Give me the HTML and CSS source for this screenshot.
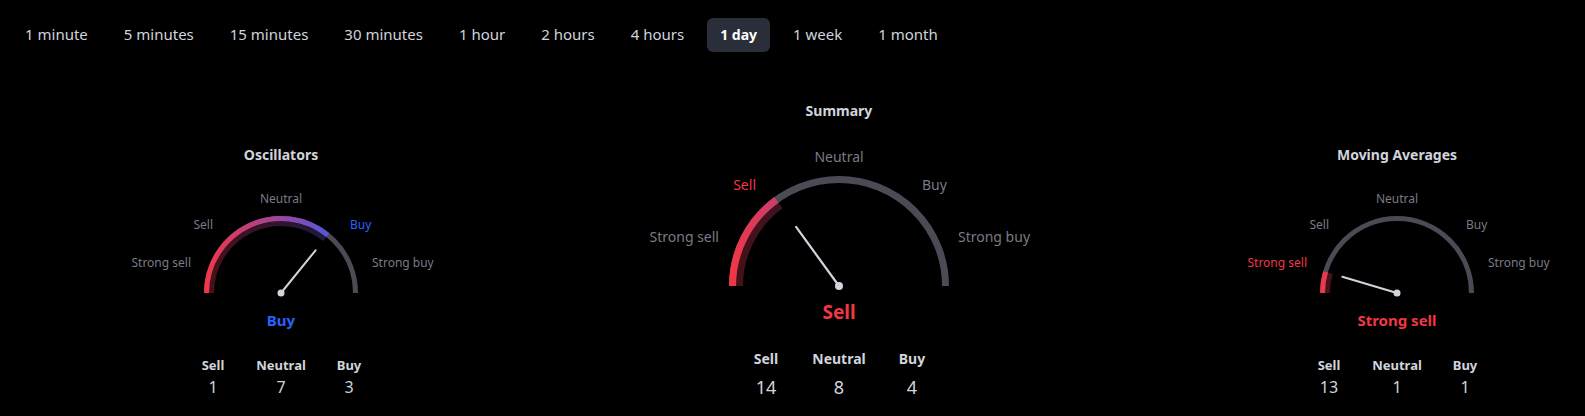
FILE: index.html
```html
<!DOCTYPE html>
<html>
<head>
<meta charset="utf-8">
<link rel="stylesheet" href="styles.css">
</head>
<body>
<nav class="tabs">
  <div class="tab">1 minute</div>
  <div class="tab">5 minutes</div>
  <div class="tab">15 minutes</div>
  <div class="tab">30 minutes</div>
  <div class="tab">1 hour</div>
  <div class="tab">2 hours</div>
  <div class="tab">4 hours</div>
  <div class="tab tab-active">1 day</div>
  <div class="tab">1 week</div>
  <div class="tab">1 month</div>
</nav>

<main class="gauges">
  <section class="col col-small">
    <h2 class="title">Oscillators</h2>
    <div class="gauge gauge-small">
      <svg class="gauge-svg" width="380" height="135" viewBox="0 0 380 135">
        <defs>
          <linearGradient id="g1" gradientUnits="userSpaceOnUse" x1="113" y1="0" x2="267" y2="0">
            <stop offset="0" stop-color="#f23645"/>
            <stop offset="0.5" stop-color="#9c45a0"/>
            <stop offset="1" stop-color="#2962ff"/>
          </linearGradient>
        </defs>
        <path d="M115.5 128 A74.5 74.5 0 0 1 264.5 128" fill="none" stroke="#4a4b55" stroke-width="5"/>
        <path d="M115.5 128 A74.5 74.5 0 0 1 236.88 70.10" fill="none" stroke="url(#g1)" stroke-width="5"/>
        <path d="M120.5 128 A69.5 69.5 0 0 1 233.74 74.01" fill="none" stroke="url(#g1)" stroke-opacity="0.3" stroke-width="5"/>
        <line x1="190" y1="128" x2="224.6" y2="85.3" stroke="#d1d4dc" stroke-width="2" stroke-linecap="round"/>
        <circle cx="190" cy="128" r="3.5" fill="#d1d4dc"/>
      </svg>
      <span class="lbl lbl-neutral">Neutral</span>
      <span class="lbl lbl-sell">Sell</span>
      <span class="lbl lbl-buy is-buy">Buy</span>
      <span class="lbl lbl-ssell">Strong sell</span>
      <span class="lbl lbl-sbuy">Strong buy</span>
    </div>
    <div class="result result-small is-buy">Buy</div>
    <div class="counts counts-small">
      <div class="count"><span class="count-label">Sell</span><span class="count-num">1</span></div>
      <div class="count"><span class="count-label">Neutral</span><span class="count-num">7</span></div>
      <div class="count"><span class="count-label">Buy</span><span class="count-num">3</span></div>
    </div>
  </section>

  <section class="col col-large">
    <h2 class="title">Summary</h2>
    <div class="gauge gauge-large">
      <svg class="gauge-svg" width="380" height="170" viewBox="0 0 380 170">
        <defs>
          <linearGradient id="g2" gradientUnits="userSpaceOnUse" x1="80" y1="0" x2="300" y2="0">
            <stop offset="0" stop-color="#f23645"/>
            <stop offset="0.5" stop-color="#9c45a0"/>
            <stop offset="1" stop-color="#2962ff"/>
          </linearGradient>
        </defs>
        <path d="M83.5 165 A106.5 106.5 0 0 1 296.5 165" fill="none" stroke="#4a4b55" stroke-width="7"/>
        <path d="M83.5 165 A106.5 106.5 0 0 1 127.40 78.84" fill="none" stroke="url(#g2)" stroke-width="7"/>
        <path d="M90.5 165 A99.5 99.5 0 0 1 131.52 84.50" fill="none" stroke="url(#g2)" stroke-opacity="0.3" stroke-width="7"/>
        <line x1="190" y1="165" x2="147.1" y2="105.9" stroke="#d1d4dc" stroke-width="2.2" stroke-linecap="round"/>
        <circle cx="190" cy="165" r="4" fill="#d1d4dc"/>
      </svg>
      <span class="lbl lbl-neutral">Neutral</span>
      <span class="lbl lbl-sell is-sell">Sell</span>
      <span class="lbl lbl-buy">Buy</span>
      <span class="lbl lbl-ssell">Strong sell</span>
      <span class="lbl lbl-sbuy">Strong buy</span>
    </div>
    <div class="result result-large is-sell">Sell</div>
    <div class="counts counts-large">
      <div class="count"><span class="count-label">Sell</span><span class="count-num">14</span></div>
      <div class="count"><span class="count-label">Neutral</span><span class="count-num">8</span></div>
      <div class="count"><span class="count-label">Buy</span><span class="count-num">4</span></div>
    </div>
  </section>

  <section class="col col-small">
    <h2 class="title">Moving Averages</h2>
    <div class="gauge gauge-small">
      <svg class="gauge-svg" width="380" height="135" viewBox="0 0 380 135">
        <defs>
          <linearGradient id="g3" gradientUnits="userSpaceOnUse" x1="113" y1="0" x2="267" y2="0">
            <stop offset="0" stop-color="#f23645"/>
            <stop offset="0.5" stop-color="#9c45a0"/>
            <stop offset="1" stop-color="#2962ff"/>
          </linearGradient>
        </defs>
        <path d="M115.5 128 A74.5 74.5 0 0 1 264.5 128" fill="none" stroke="#4a4b55" stroke-width="5"/>
        <path d="M115.5 128 A74.5 74.5 0 0 1 118.57 106.90" fill="none" stroke="url(#g3)" stroke-width="5"/>
        <path d="M120.5 128 A69.5 69.5 0 0 1 123.36 108.32" fill="none" stroke="url(#g3)" stroke-opacity="0.3" stroke-width="5"/>
        <line x1="190" y1="128" x2="135.3" y2="111.8" stroke="#d1d4dc" stroke-width="2" stroke-linecap="round"/>
        <circle cx="190" cy="128" r="3.5" fill="#d1d4dc"/>
      </svg>
      <span class="lbl lbl-neutral">Neutral</span>
      <span class="lbl lbl-sell">Sell</span>
      <span class="lbl lbl-buy">Buy</span>
      <span class="lbl lbl-ssell is-sell">Strong sell</span>
      <span class="lbl lbl-sbuy">Strong buy</span>
    </div>
    <div class="result result-small is-sell">Strong sell</div>
    <div class="counts counts-small">
      <div class="count"><span class="count-label">Sell</span><span class="count-num">13</span></div>
      <div class="count"><span class="count-label">Neutral</span><span class="count-num">1</span></div>
      <div class="count"><span class="count-label">Buy</span><span class="count-num">1</span></div>
    </div>
  </section>
</main>
</body>
</html>
```

FILE: styles.css
```css
* { box-sizing: border-box; }
html, body { margin: 0; padding: 0; background: #000; }
body {
  font-family: "Noto Sans", "DejaVu Sans", sans-serif;
  color: #d1d4dc;
  width: 1585px;
  height: 416px;
  overflow: hidden;
}

.tabs {
  display: flex;
  gap: 10px;
  padding: 18px 0 0 12px;
}
.tab {
  height: 34px;
  line-height: 33px;
  padding: 0 13px;
  font-size: 15px;
  color: #d1d4dc;
  border-radius: 6px;
  white-space: nowrap;
}
.tab-active {
  background: #2a2e39;
  color: #fff;
  font-weight: 700;
  font-size: 14px;
}

.gauges {
  display: flex;
  align-items: flex-start;
  gap: 178px;
  padding-left: 91px;
}
.col {
  width: 380px;
  display: flex;
  flex-direction: column;
  align-items: center;
}
.col-small { margin-top: 93px; }
.col-large { margin-top: 49px; }

.title {
  margin: 0;
  font-size: 14px;
  line-height: 20px;
  font-weight: 700;
  color: #d1d4dc;
}

.gauge {
  position: relative;
  width: 380px;
}
.gauge-small { height: 135px; }
.gauge-large { height: 170px; }
.gauge-svg { display: block; }

.lbl {
  position: absolute;
  white-space: nowrap;
  color: #787b86;
}
.gauge-small .lbl { font-size: 12px; line-height: 16px; }
.gauge-large .lbl { font-size: 14px; line-height: 18px; }

.gauge-small .lbl-neutral { left: 50%; transform: translateX(-50%); top: 26px; }
.gauge-small .lbl-sell { right: 258px; top: 52px; }
.gauge-small .lbl-buy { left: 259px; top: 52px; }
.gauge-small .lbl-ssell { right: 280px; top: 90px; }
.gauge-small .lbl-sbuy { left: 281px; top: 90px; }

.gauge-large .lbl-neutral { left: 50%; transform: translateX(-50%); top: 27px; }
.gauge-large .lbl-sell { right: 273px; top: 55px; }
.gauge-large .lbl-buy { left: 273px; top: 55px; }
.gauge-large .lbl-ssell { right: 310px; top: 107px; }
.gauge-large .lbl-sbuy { left: 309px; top: 107px; }

.lbl.is-buy, .result.is-buy { color: #2962ff; }
.lbl.is-sell, .result.is-sell { color: #f23645; }

.result { font-weight: 700; }
.result-small { font-size: 15px; line-height: 20px; margin-top: 10px; }
.result-large { font-size: 19px; line-height: 24px; margin-top: 9px; }

.counts { display: flex; }
.count {
  display: flex;
  flex-direction: column;
  align-items: center;
}
.count-label { font-weight: 700; color: #d1d4dc; }
.count-num { color: #d1d4dc; }

.counts-small { margin-top: 26px; }
.counts-small .count { width: 68px; }
.counts-small .count-label { font-size: 13px; line-height: 18px; }
.counts-small .count-num { font-size: 16px; line-height: 22px; margin-top: 2px; }

.counts-large { margin-top: 26px; }
.counts-large .count { width: 73px; }
.counts-large .count-label { font-size: 14px; line-height: 18px; }
.counts-large .count-num { font-size: 18px; line-height: 22px; margin-top: 8px; }
```
